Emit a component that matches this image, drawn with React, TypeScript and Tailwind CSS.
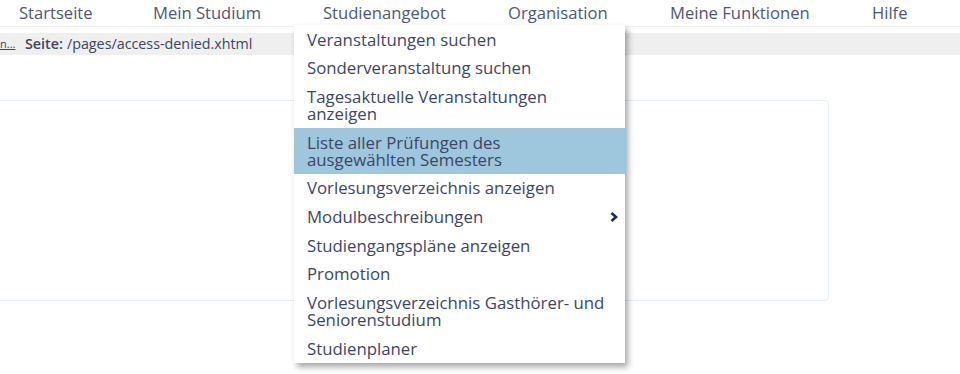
const navItems = [
  { label: 'Startseite', width: 134 },
  { label: 'Mein Studium', width: 170 },
  { label: 'Studienangebot', width: 185 },
  { label: 'Organisation', width: 162 },
  { label: 'Meine Funktionen', width: 202 },
  { label: 'Hilfe', width: 60 },
];

const menuItems: { label: string[]; active?: boolean; sub?: boolean }[] = [
  { label: ['Veranstaltungen suchen'] },
  { label: ['Sonderveranstaltung suchen'] },
  { label: ['Tagesaktuelle Veranstaltungen', 'anzeigen'] },
  { label: ['Liste aller Prüfungen des', 'ausgewählten Semesters'], active: true },
  { label: ['Vorlesungsverzeichnis anzeigen'] },
  { label: ['Modulbeschreibungen'], sub: true },
  { label: ['Studiengangspläne anzeigen'] },
  { label: ['Promotion'] },
  { label: ['Vorlesungsverzeichnis Gasthörer- und', 'Seniorenstudium'] },
  { label: ['Studienplaner'] },
];

const font = { fontFamily: '"Open Sans", "Noto Sans", sans-serif' };

export default function App() {
  return (
    <div className="relative w-[960px] h-[374px] overflow-hidden bg-white" style={font}>
      {/* top navigation */}
      <div className="flex h-[27px] items-center border-b border-[#f0f0f0] pl-[19px] text-[16.6px] text-[#4d5775]">
        {navItems.map((item) => (
          <span key={item.label} className="shrink-0 whitespace-nowrap" style={{ width: item.width }}>
            {item.label}
          </span>
        ))}
      </div>

      {/* breadcrumb */}
      <div className="mt-[6px] flex h-[22px] items-center bg-[#efefef] text-[14.3px] text-[#3b4660]">
        <span className="w-[17px] overflow-hidden text-[11px] text-[#3b4660] underline">n...</span>
        <span className="ml-[8px] font-semibold">Seite:</span>
        <span className="ml-[4px]">/pages/access-denied.xhtml</span>
      </div>

      {/* content card */}
      <div className="mt-[45px] ml-[-10px] h-[201px] w-[839px] rounded-[4px] border border-[#e3eef6]" />

      {/* dropdown */}
      <div className="absolute left-[294px] top-[25px] w-[331px] bg-white shadow-[3px_4px_6px_rgba(0,0,0,0.35)]">
        {menuItems.map((item) => (
          <div
            key={item.label.join(' ')}
            className={`flex items-center justify-between pl-[13px] pr-[6px] py-[5.83px] text-[16.8px] leading-[17px] text-[#3b4667] ${
              item.active ? 'bg-[#9ec6dc]' : ''
            }`}
          >
            <div>
              {item.label.map((l) => (
                <div key={l} className="whitespace-nowrap">
                  {l}
                </div>
              ))}
            </div>
            {item.sub && (
              <svg width="8" height="10" viewBox="0 0 8 10" className="mr-[1px]">
                <path d="M1.5 1 L6 5 L1.5 9" fill="none" stroke="#1f2b57" strokeWidth="2.6" />
              </svg>
            )}
          </div>
        ))}
      </div>
    </div>
  );
}
